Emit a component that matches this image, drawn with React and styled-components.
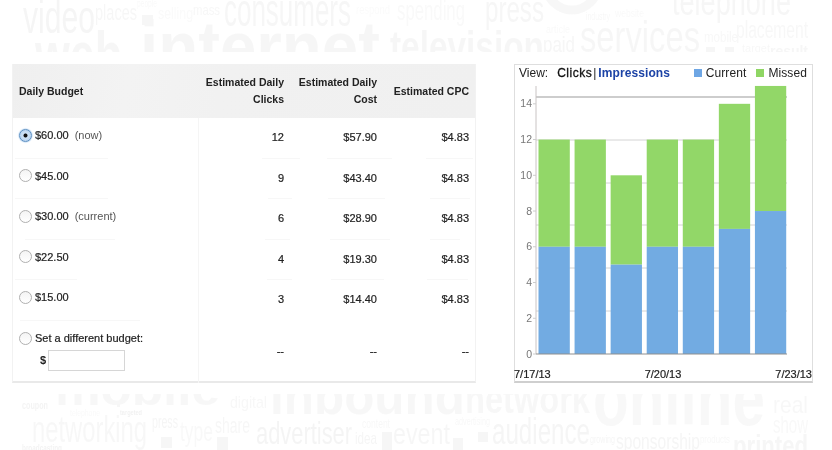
import React from "react";
import styled, { createGlobalStyle } from "styled-components";

const Global = createGlobalStyle`
  html, body { margin: 0; padding: 0; background: #fff; }
  body { font-family: "Liberation Sans", Arial, sans-serif; color: #222; }
`;

const Page = styled.div`
  position: relative;
  width: 832px;
  height: 450px;
  overflow: hidden;
  background: #fff;
  filter: blur(0.4px);
`;
const Cloud = styled.svg`
  position: absolute;
  inset: 0;
  width: 832px;
  height: 450px;
  opacity: 0.8;
  font-family: "Liberation Sans", Arial, sans-serif;
`;
const Content = styled.main`
  position: relative;
  display: flex;
  align-items: flex-start;
  gap: 38px;
  padding: 64px 0 0 12px;
`;

/* ---------- table ---------- */
const COLS = "185px 86px 93px 92px";
const Table = styled.section`
  width: 464px;
  height: 319px;
  box-sizing: border-box;
  background: #fff;
  border: 1px solid #f2f2f2;
  border-bottom: 2px solid #e9e9e9;
  border-top: 0;
`;
const Head = styled.header`
  display: grid;
  grid-template-columns: ${COLS};
  height: 54px;
  background: linear-gradient(100deg, #efefef 0%, #f3f3f3 25%, #f1f1f1 45%, #f0f0f0 100%);
  font-size: 10.5px;
  font-weight: 700;
  line-height: 17px;
  color: #222;
`;
const HeadCell = styled.div`
  display: flex;
  align-items: center;
  justify-content: ${(p) => (p.$left ? "flex-start" : "flex-end")};
  text-align: ${(p) => (p.$left ? "left" : "right")};
  padding: ${(p) => (p.$left ? "0 0 0 6px" : "0")};
`;
const Body = styled.div`
  background: linear-gradient(#f5f5f5, #f5f5f5) 185px 0 / 1px 100% no-repeat;
`;
const Row = styled.div`
  display: grid;
  grid-template-columns: ${COLS};
  height: ${(p) => (p.$tall ? "62px" : "39.5px")};
  font-size: 11px;
  -webkit-text-stroke: 0.2px #222;
`;
const Choice = styled.label`
  display: flex;
  align-items: ${(p) => (p.$top ? "flex-start" : "center")};
  gap: 2px;
  padding: ${(p) => (p.$top ? "11px 0 0 6px" : "0 0 5px 6px")};
  color: #222;
`;
const Radio = styled.input.attrs({ type: "radio", name: "budget" })`
  appearance: none;
  flex: none;
  width: 13px;
  height: 13px;
  margin: 0 1px 0 0;
  border-radius: 50%;
  border: 1px solid #b0b0b0;
  background: linear-gradient(#f4f4f4, #fff);
  box-sizing: border-box;
  &:checked {
    border-color: #5b8fc2;
    background: radial-gradient(circle, #111 0 1.6px, #cfe2f6 2.4px, #a9c9ea 100%);
    box-shadow: 0 0 1px 0.5px #b5d2ef;
  }
`;
const Note = styled.span`
  margin-left: 4px;
  color: #555;
  -webkit-text-stroke: 0;
`;
const Value = styled.div`
  display: flex;
  align-items: center;
  justify-content: flex-end;
  margin-top: -1px;
  color: #222;
`;
const Rules = styled.div`
  display: flex;
  height: 1px;
`;
const Rule = styled.i`
  display: block;
  height: 1px;
  background: #f7f7f7;
`;
const CustomCell = styled.div`
  display: flex;
  flex-direction: column;
`;
const Amount = styled.div`
  display: flex;
  align-items: center;
  gap: 2px;
  margin: 5px 0 0 27px;
  font-size: 11px;
  font-weight: 700;
  -webkit-text-stroke: 0;
`;
const AmountInput = styled.input`
  width: 77px;
  height: 21px;
  box-sizing: border-box;
  border: 1px solid #d6d6d6;
  background: #fff;
  padding: 0;
`;

/* ---------- chart ---------- */
const ChartCard = styled.section`
  width: 299px;
  height: 319px;
  box-sizing: border-box;
  background: #fff;
  border: 1px solid #dedede;
  border-bottom: 2px solid #cfcfcf;
`;
const ChartHead = styled.div`
  display: flex;
  align-items: center;
  height: 15px;
  padding: 0 5px 0 4px;
  font-size: 12px;
  color: #222;
`;
const ViewLabel = styled.span`
  margin-right: 9px;
`;
const Active = styled.span`
  color: #111;
  letter-spacing: 0.5px;
  -webkit-text-stroke: 0.3px #111;
`;
const Sep = styled.span`
  margin: 0 2px 0 1px;
`;
const Link = styled.a`
  color: #1c43a6;
  font-weight: 700;
  font-size: 12px;
  letter-spacing: 0.1px;
`;
const Legend = styled.div`
  display: flex;
  align-items: center;
  margin-left: auto;
  gap: 4px;
  letter-spacing: 0.1px;
`;
const Swatch = styled.i`
  display: block;
  width: 8px;
  height: 8px;
  margin-left: ${(p) => (p.$first ? "0" : "6px")};
  background: ${(p) => p.$color};
`;
const Plot = styled.svg`
  display: block;
  width: 297px;
  height: 287px;
  font-family: "Liberation Sans", Arial, sans-serif;
`;
const Dates = styled.div`
  display: flex;
  justify-content: space-between;
  font-size: 11px;
  line-height: 13px;
  color: #222;
  margin: 1px 0 0 -1px;
  -webkit-text-stroke: 0.2px #222;
`;

/* ---------- data ---------- */
const rows = [
  { amt: "$60.00", note: "(now)", clicks: "12", cost: "$57.90", on: true,
    rules: [[15, 108], [262, 300], [327, 392], [426, 473]] },
  { amt: "$45.00", clicks: "9", cost: "$43.40",
    rules: [[15, 108], [268, 292], [328, 385], [430, 470]] },
  { amt: "$30.00", note: "(current)", clicks: "6", cost: "$28.90",
    rules: [[25, 115], [265, 290], [330, 390], [430, 460]] },
  { amt: "$22.50", clicks: "4", cost: "$19.30",
    rules: [[15, 77], [267, 292], [331, 384], [427, 468]] },
  { amt: "$15.00", clicks: "3", cost: "$14.40", rules: [[20, 140]] },
];

const bars = [
  [6, 12], [6, 12], [5, 10], [6, 12], [6, 12], [7, 14], [8, 15],
];
const BASE = 354;
const UNIT = 17.87;
const y = (v) => BASE - UNIT * v;

const top = [
  ["video", 23, 33, 46, 72, "#f3f3f3"],
  ["places", 95, 20, 22, 42, "#f5f5f5"],
  ["people", 137, 7, 10, 20, "#f8f8f8"],
  ["selling", 158, 19, 17, 35, "#f9f9f9"],
  ["mass", 193, 15, 15, 27, "#f5f5f5"],
  ["consumers", 224, 26, 46, 127, "#f4f4f4"],
  ["respond", 356, 14, 13, 34, "#fafafa"],
  ["spending", 397, 20, 27, 68, "#f8f8f8"],
  ["press", 485, 22, 36, 59, "#f4f4f4"],
  ["industry", 586, 20, 10, 24, "#f6f6f6"],
  ["website", 615, 17, 11, 29, "#f8f8f8"],
  ["telephone", 672, 15, 38, 119, "#f4f4f4"],
  ["article", 546, 33, 11, 24, "#f8f8f8"],
  ["services", 580, 52, 44, 120, "#f5f5f5"],
  ["mobile", 704, 42, 14, 34, "#f6f6f6"],
  ["placement", 736, 38, 23, 72, "#f6f6f6"],
  ["target", 742, 52, 10, 28, "#f6f6f6"],
  ["result", 770, 56, 14, 38, "#f4f4f4", true],
  ["web", 35, 78, 66, 87, "#f5f5f5", true],
  ["internet", 140, 72, 72, 240, "#f5f5f5", true],
  ["television", 390, 62, 44, 154, "#f5f5f5", true],
  ["paid", 543, 52, 22, 32, "#f4f4f4"],
];
const bottom = [
  ["coupon", 22, 409, 11, 26, "#f1f1f1", true],
  ["digital", 230, 408, 17, 37, "#f6f6f6"],
  ["mobile", 55, 405, 46, 165, "#f6f6f6", true],
  ["inbound", 270, 414, 52, 195, "#f6f6f6", true],
  ["network", 465, 413, 40, 125, "#f6f6f6", true],
  ["online", 593, 425, 78, 172, "#f7f7f7", true],
  ["real", 773, 413, 24, 35, "#f6f6f6"],
  ["show", 773, 433, 24, 35, "#f7f7f7"],
  ["telephone", 70, 416, 9, 30, "#f8f8f8"],
  ["targeted", 120, 415, 8, 22, "#eeeeee", true],
  ["networking", 32, 442, 36, 115, "#f6f6f6"],
  ["press", 152, 428, 18, 26, "#f3f3f3"],
  ["type", 180, 441, 28, 33, "#f7f7f7"],
  ["share", 215, 433, 22, 35, "#f5f5f5"],
  ["advertiser", 256, 444, 32, 96, "#f2f2f2"],
  ["content", 362, 428, 13, 28, "#f6f6f6"],
  ["idea", 355, 444, 17, 22, "#f3f3f3"],
  ["event", 393, 444, 30, 57, "#f5f5f5"],
  ["advertising", 455, 425, 10, 35, "#f6f6f6"],
  ["audience", 492, 444, 36, 98, "#f3f3f3"],
  ["growing", 590, 443, 10, 25, "#f3f3f3"],
  ["sponsorship", 616, 449, 22, 84, "#f3f3f3"],
  ["products", 700, 443, 10, 30, "#f6f6f6"],
  ["printed", 733, 456, 30, 75, "#f4f4f4", true],
  ["broadcasting", 22, 451, 9, 40, "#f0f0f0", true],
];
const blocks = [
  [142, 15, 11, 10], [706, 47, 9, 5], [725, 47, 9, 5],
  [161, 437, 11, 11], [217, 437, 11, 13], [382, 432, 10, 18],
  [478, 432, 10, 10], [453, 438, 10, 12], [117, 404, 3, 3],
];

const Word = ({ w }) => (
  <text
    x={w[1]}
    y={w[2]}
    fontSize={w[3]}
    textLength={w[4]}
    lengthAdjust="spacingAndGlyphs"
    fill={w[5]}
    fontWeight={w[6] ? 700 : 400}
  >
    {w[0]}
  </text>
);

export default function App() {
  return (
    <Page>
      <Global />
      <Cloud viewBox="0 0 832 450" aria-hidden="true">
        <defs>
          <clipPath id="topBand"><rect x="0" y="0" width="832" height="52" /></clipPath>
          <clipPath id="bottomBand"><rect x="0" y="394" width="832" height="56" /></clipPath>
        </defs>
        <g clipPath="url(#topBand)">
          {top.map((w) => <Word key={w[0] + w[1]} w={w} />)}
          <circle cx="572" cy="-16" r="26" fill="none" stroke="#f6f6f6" strokeWidth="9" />
        </g>
        <g clipPath="url(#bottomBand)">
          {bottom.map((w) => <Word key={w[0] + w[1]} w={w} />)}
        </g>
        {blocks.map((b) => (
          <rect key={b[0]} x={b[0]} y={b[1]} width={b[2]} height={b[3]} fill="#f4f4f4" />
        ))}
      </Cloud>
      <Content>
        <Table>
          <Head>
            <HeadCell $left>Daily Budget</HeadCell>
            <HeadCell>Estimated Daily<br />Clicks</HeadCell>
            <HeadCell>Estimated Daily<br />Cost</HeadCell>
            <HeadCell>Estimated CPC</HeadCell>
          </Head>
          <Body>
            {rows.map((r) => (
              <React.Fragment key={r.amt}>
                <Row>
                  <Choice>
                    <Radio defaultChecked={r.on} />
                    {r.amt}
                    {r.note && <Note>{r.note}</Note>}
                  </Choice>
                  <Value>{r.clicks}</Value>
                  <Value>{r.cost}</Value>
                  <Value>$4.83</Value>
                </Row>
                <Rules>
                  {r.rules.map(([a, b], i) => (
                    <Rule
                      key={a}
                      style={{
                        width: b - a,
                        marginLeft: a - (i ? r.rules[i - 1][1] : 13),
                      }}
                    />
                  ))}
                </Rules>
              </React.Fragment>
            ))}
            <Row $tall>
              <CustomCell>
                <Choice $top>
                  <Radio />
                  Set a different budget:
                </Choice>
                <Amount>
                  $
                  <AmountInput aria-label="Daily budget" />
                </Amount>
              </CustomCell>
              <Value>--</Value>
              <Value>--</Value>
              <Value>--</Value>
            </Row>
          </Body>
        </Table>

        <ChartCard>
          <ChartHead>
            <ViewLabel>View:</ViewLabel>
            <Active>Clicks</Active>
            <Sep>|</Sep>
            <Link>Impressions</Link>
            <Legend>
              <Swatch $first $color="#6ea6e4" />
              <span>Current</span>
              <Swatch $color="#8fd664" />
              <span>Missed</span>
            </Legend>
          </ChartHead>
          <Plot viewBox="515 80 297 287" role="img" aria-label="Clicks per day">
            {[140, 183, 225, 268, 311].map((g) => (
              <line key={g} x1="536" x2="787" y1={g} y2={g} stroke="#d4d4d4" />
            ))}
            <line x1="536" x2="787" y1="97" y2="97" stroke="#bdbdbd" strokeWidth="1.4" />
            <line x1="536" x2="536" y1="86" y2={BASE} stroke="#c9c4c4" />
            {[0, 2, 4, 6, 8, 10, 12, 14].map((v) => (
              <g key={v}>
                <line x1="533" x2="536" y1={y(v)} y2={y(v)} stroke="#cccccc" />
                <text x="532" y={y(v) + 3.5} fontSize="10.5" textAnchor="end" fill="#777">
                  {v}
                </text>
              </g>
            ))}
            {bars.map(([cur, total], i) => {
              const x = 538.5 + i * 36.07;
              return (
                <g key={i}>
                  <rect x={x} y={y(total)} width="31.3" height={y(cur) - y(total)} fill="#92d768" />
                  <rect x={x} y={y(cur)} width="31.3" height={BASE - y(cur)} fill="#72abe2" />
                </g>
              );
            })}
            <line x1="536" x2="787" y1={BASE} y2={BASE} stroke="#8f8f8f" />
          </Plot>
          <Dates>
            <span>7/17/13</span>
            <span>7/20/13</span>
            <span>7/23/13</span>
          </Dates>
        </ChartCard>
      </Content>
    </Page>
  );
}
